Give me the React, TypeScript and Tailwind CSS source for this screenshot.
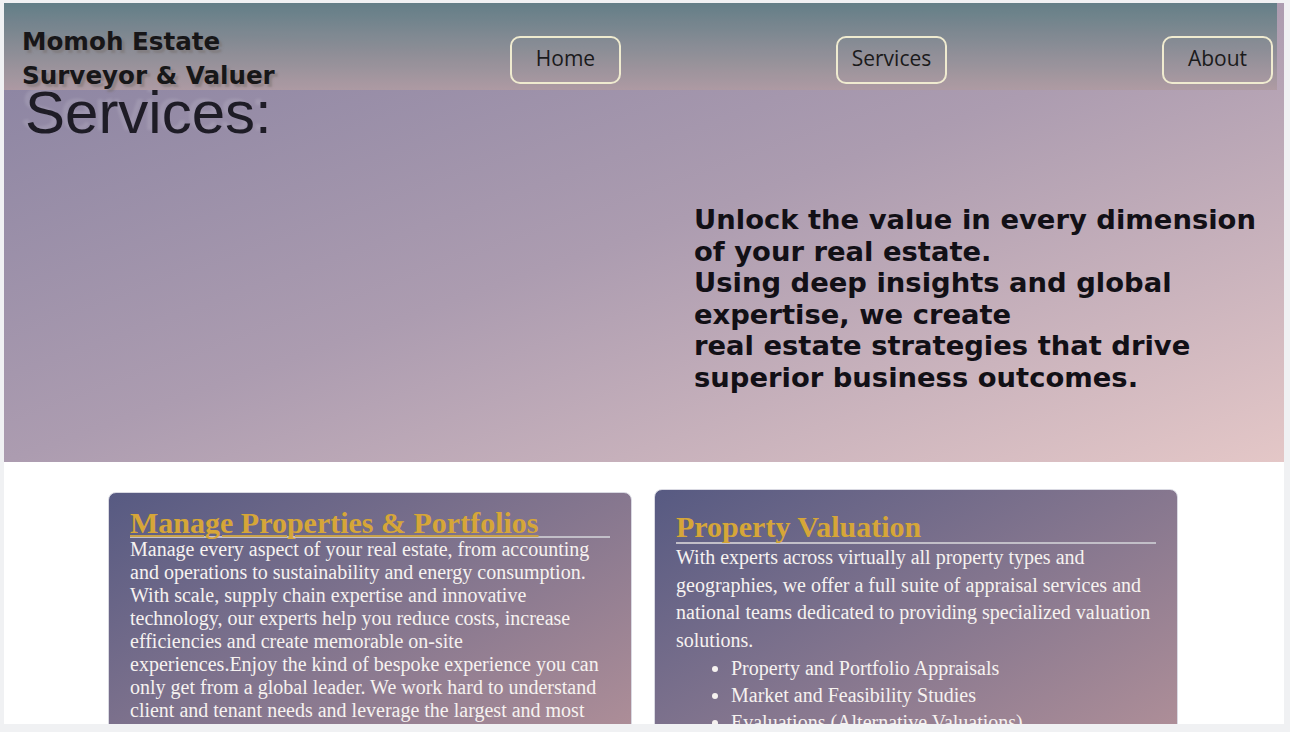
const navItems = ['Home', 'Services', 'About'];

const valuationList = [
	'Property and Portfolio Appraisals',
	'Market and Feasibility Studies',
	'Evaluations (Alternative Valuations)',
	'Litigation Support and Expert Witness'
];

const App = () => {
	return (
		<div className="h-[732px] w-[1290px] overflow-hidden bg-[#f0f1f3] pl-[4px] pt-[3px]">
			<div className="h-[721px] w-[1280px] overflow-hidden bg-white">
				<section className="relative flex h-[459px] flex-col bg-linear-to-br from-[#8781a0] via-[#ac9cb0] to-[#e4c7c7]">
					<header className="absolute left-0 top-0 flex h-[87px] w-[1273px] items-start bg-linear-to-b from-[#617e86] to-[#af9ba3] opacity-95">
						<p className="ml-[18px] mt-[22px] font-['DejaVu_Sans',sans-serif] text-[24.6px] font-bold leading-[33.5px] text-[#111] [text-shadow:3px_3px_2px_rgba(120,110,105,0.5)]">
							Momoh Estate
							<br />
							Surveyor &amp; Valuer
						</p>
						<nav className="ml-auto mr-[4px] mt-[33px] flex gap-[215px]">
							{navItems.map(item => (
								<a
									key={item}
									className="flex h-[48px] w-[111px] items-center justify-center rounded-[10px] border-2 border-[#f4f0d2] pb-[3px] font-['Open_Sans',sans-serif] text-[21px] text-[#141414]">
									{item}
								</a>
							))}
						</nav>
					</header>
					<h1 className="ml-[21px] pt-[80px] font-['Liberation_Sans',Arial,sans-serif] text-[60px] leading-none text-[#1e1c26] [text-shadow:-5px_-3px_3px_rgba(255,255,255,0.12)]">
						Services:
					</h1>
					<p className="ml-[690px] mt-[61px] w-[580px] font-['DejaVu_Sans',sans-serif] text-[27.4px] font-bold leading-[31.6px] text-[#121016]">
						Unlock the value in every dimension of your real estate.
						<br />
						Using deep insights and global expertise, we create
						<br />
						real estate strategies that drive superior business outcomes.
					</p>
				</section>
				<section className="flex items-start justify-center gap-[22px] pr-[2px] pt-[27px] font-['Liberation_Serif','Times_New_Roman',serif] text-[#f6f2f0]">
					<div className="mt-[3px] w-[524px] rounded-lg border border-[#d9d9e2] bg-linear-to-br from-[#575a82] to-[#b8949a] px-[21px] pb-6 pt-[17px]">
						<h2 className="border-b-2 border-[#c2bfc8] text-[30px] font-bold leading-[26px] text-[#d6a638] underline decoration-[#c9a24a] decoration-2 underline-offset-[2px]">
							Manage Properties &amp; Portfolios
						</h2>
						<p className="text-[20px] leading-[23px]">
							Manage every aspect of your real estate, from accounting and operations to
							sustainability and energy consumption. With scale, supply chain expertise and
							innovative technology, our experts help you reduce costs, increase efficiencies
							and create memorable on-site experiences.Enjoy the kind of bespoke experience
							you can only get from a global leader. We work hard to understand client and
							tenant needs and leverage the largest and most developed platform in the
							industry to deliver results that matter.
						</p>
					</div>
					<div className="w-[524px] rounded-lg border border-[#d9d9e2] bg-linear-to-br from-[#575a82] to-[#b8949a] px-[21px] pb-6 pt-[22px]">
						<h2 className="border-b-2 border-[#c2bfc8] text-[30px] font-bold leading-[30px] text-[#d6a638]">
							Property Valuation
						</h2>
						<p className="text-[20px] leading-[27.7px]">
							With experts across virtually all property types and geographies, we offer a
							full suite of appraisal services and national teams dedicated to providing
							specialized valuation solutions.
						</p>
						<ul className="list-disc pl-[55px] text-[20px] leading-[27px]">
							{valuationList.map(item => (
								<li key={item}>{item}</li>
							))}
						</ul>
					</div>
				</section>
			</div>
		</div>
	);
};

export default App;
